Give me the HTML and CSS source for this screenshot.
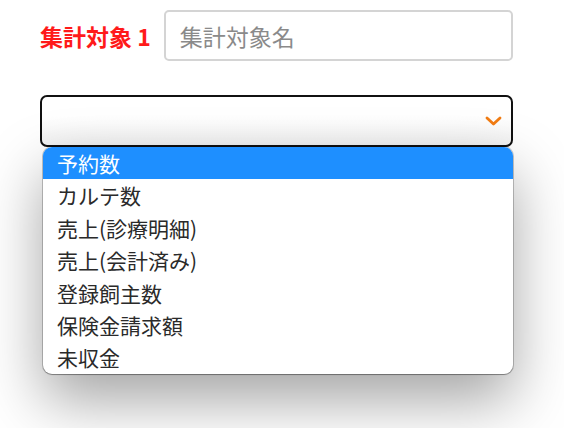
FILE: index.html
```html
<!DOCTYPE html>
<html lang="ja">
<head>
    <meta charset="UTF-8">
    <title>集計対象</title>
    <link rel="stylesheet" href="styles.css">
</head>
<body>
    <main class="panel">
        <div class="target-row">
            <label class="target-label">集計対象 1</label>
            <input type="text" class="target-name" placeholder="集計対象名">
        </div>
        <div class="select-wrap">
            <div class="select-box">
                <svg class="chevron" width="17" height="10" viewBox="0 0 17 10">
                    <path d="M2 2 L8.5 8 L15 2" fill="none" stroke="#f07b12" stroke-width="2.8" stroke-linecap="round" stroke-linejoin="round"/>
                </svg>
            </div>
            <div class="options">
                <div class="option selected">予約数</div>
                <div class="option">カルテ数</div>
                <div class="option">売上(診療明細)</div>
                <div class="option">売上(会計済み)</div>
                <div class="option">登録飼主数</div>
                <div class="option">保険金請求額</div>
                <div class="option">未収金</div>
            </div>
        </div>
    </main>
</body>
</html>
```

FILE: styles.css
```css
html, body {
    margin: 0;
    min-height: 428px;
    background: #fff;
    font-family: "Noto Sans CJK JP", "Noto Sans", sans-serif;
}

.panel {
    width: 473px;
    padding: 10px 0 0 40px;
}

.target-row {
    display: flex;
    align-items: center;
    gap: 13px;
}

.target-label {
    color: #ff1a1a;
    font-size: 23px;
    font-weight: bold;
    white-space: nowrap;
}

.target-name {
    flex: 1;
    height: 51px;
    box-sizing: border-box;
    border: 2px solid #d4d4d4;
    border-radius: 5px;
    padding: 0 14px;
    font-family: inherit;
    font-size: 23px;
    color: #333;
}

.target-name::placeholder {
    color: #8a8a8a;
}

.select-wrap {
    margin-top: 34px;
}

.select-box {
    height: 52px;
    box-sizing: border-box;
    border: 2px solid #111;
    border-radius: 7px;
    background: linear-gradient(to bottom, #fff 40%, #f2f2f2);
    display: flex;
    align-items: center;
    justify-content: flex-end;
    padding-right: 9px;
}

.options {
    margin-left: 3px;
    background: #fff;
    border-radius: 9px;
    overflow: hidden;
    box-shadow: 0 0 0 1px rgba(0, 0, 0, 0.2), 0 1px 1px rgba(0, 0, 0, 0.25), 0 26px 60px rgba(0, 0, 0, 0.36);
}

.option {
    height: 32.4px;
    line-height: 32px;
    padding-left: 14px;
    font-size: 21px;
    color: #2a2a2a;
}

.option.selected {
    background: #1e8fff;
    color: #fff;
}
```
